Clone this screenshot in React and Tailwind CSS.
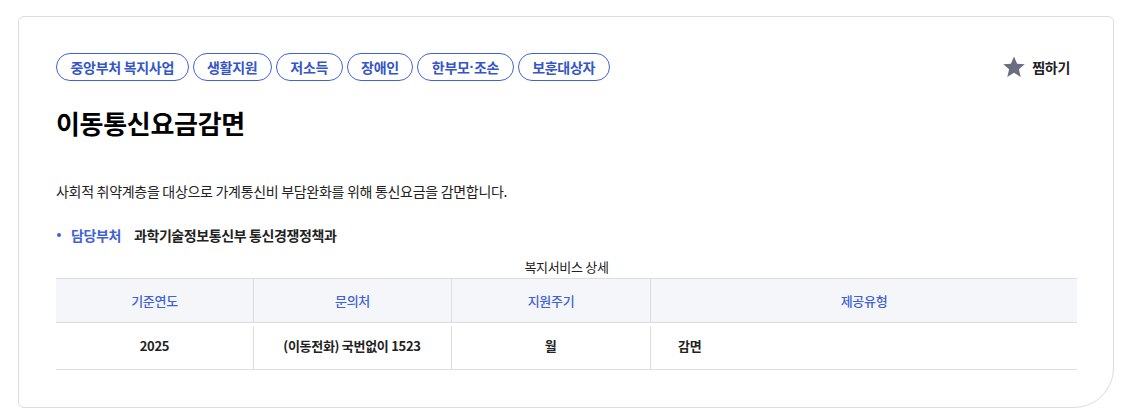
import React from "react";

const tags = ["중앙부처 복지사업", "생활지원", "저소득", "장애인", "한부모·조손", "보훈대상자"];

function Tag({ t }) {
  const parts = t.split("·");
  return (
    <span className="h-[28px] px-[13.5px] flex items-center border border-[#3f62d9] rounded-full text-[14px] font-semibold text-[#3556c8] leading-none tracking-[-0.3px]">
      {parts.length > 1 ? (
        <>
          {parts[0]}
          <span style={{ fontFamily: '"Liberation Sans", sans-serif' }} className="font-bold">·</span>
          {parts[1]}
        </>
      ) : (
        t
      )}
    </span>
  );
}

export default function App() {
  return (
    <div
      className="w-[1126px] h-[420px] bg-white pt-[16px] pl-[18px]"
      style={{ fontFamily: '"Noto Sans CJK KR", "Noto Sans", sans-serif' }}
    >
      <div className="w-[1096px] h-[392px] border border-[#dddddd] rounded-[6px] rounded-br-[40px] pl-[37px] pr-[36px] pt-[36px]">
        <div className="flex items-center justify-between">
          <div className="flex gap-[4px]">
            {tags.map((t) => (
              <Tag key={t} t={t} />
            ))}
          </div>
          <div className="flex items-center gap-[6px] mr-[7px]">
            <svg width="24" height="24" viewBox="0 0 24 24">
              <path
                d="M12 1.5l3.1 7.2 7.6.6-5.8 5 1.8 7.6L12 17.8l-6.7 4.1 1.8-7.6-5.8-5 7.6-.6z"
                fill="#6b6e80"
              />
            </svg>
            <span className="text-[14px] font-bold text-[#222] tracking-[-0.3px]">찜하기</span>
          </div>
        </div>
        <h1 className="mt-[24px] text-[26px] font-bold text-black leading-[36px] tracking-[-0.3px]">이동통신요금감면</h1>
        <p className="mt-[40px] text-[14px] text-[#222] leading-[20px] tracking-[-0.3px]">
          사회적 취약계층을 대상으로 가계통신비 부담완화를 위해 통신요금을 감면합니다.
        </p>
        <div className="mt-[24px] flex items-center text-[14px] leading-[20px] tracking-[-0.4px]">
          <span className="w-[4px] h-[4px] rounded-full bg-[#3f62d9] ml-[1px] mr-[10px]"></span>
          <span className="font-bold text-[#3f62d9]">담당부처</span>
          <span className="ml-[13px] font-bold text-[#222]">과학기술정보통신부 통신경쟁정책과</span>
        </div>
        <div className="w-[1021px] mt-[13px]">
          <div className="text-center text-[13px] text-[#222] leading-[18px] mb-[2px] tracking-[-0.3px]">복지서비스 상세</div>
          <div className="border-t border-[#dddddd] grid grid-cols-[197px_198px_199px_1fr] tracking-[-0.3px]">
            <div className="h-[44px] bg-[#f5f6fa] border-b border-[#dddddd] flex items-center justify-center text-[13px] font-medium text-[#3f62d9]">기준연도</div>
            <div className="h-[44px] bg-[#f5f6fa] border-b border-l border-[#dddddd] flex items-center justify-center text-[13px] font-medium text-[#3f62d9]">문의처</div>
            <div className="h-[44px] bg-[#f5f6fa] border-b border-l border-[#dddddd] flex items-center justify-center text-[13px] font-medium text-[#3f62d9]">지원주기</div>
            <div className="h-[44px] bg-[#f5f6fa] border-b border-l border-[#dddddd] flex items-center justify-center text-[13px] font-medium text-[#3f62d9]">제공유형</div>
            <div className="h-[47px] border-b border-[#dddddd] flex items-center justify-center text-[13px] font-bold text-[#222]">2025</div>
            <div className="h-[47px] border-b border-[#dddddd] flex items-center justify-center text-[13px] font-bold text-[#222] relative">
              <span className="absolute left-0 top-[3px] bottom-0 w-px bg-[#dddddd]"></span>
              (이동전화) 국번없이 1523
            </div>
            <div className="h-[47px] border-b border-[#dddddd] flex items-center justify-center text-[13px] font-bold text-[#222] relative">
              <span className="absolute left-0 top-[3px] bottom-0 w-px bg-[#dddddd]"></span>
              월
            </div>
            <div className="h-[47px] border-b border-[#dddddd] flex items-center pl-[28px] text-[13px] font-bold text-[#222] relative">
              <span className="absolute left-0 top-[3px] bottom-0 w-px bg-[#dddddd]"></span>
              감면
            </div>
          </div>
        </div>
      </div>
    </div>
  );
}
